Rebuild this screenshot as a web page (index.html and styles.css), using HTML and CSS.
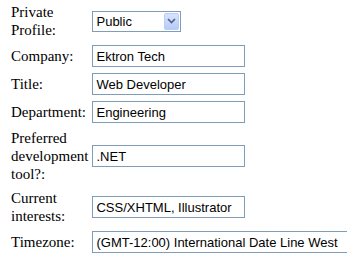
FILE: index.html
```html
<!DOCTYPE html>
<html lang="en">
<head>
    <meta charset="UTF-8">
    <title>Profile</title>
    <link rel="stylesheet" href="styles.css">
</head>
<body>
    <table class="profile-form">
        <tr>
            <td class="label">Private Profile:</td>
            <td>
                <div class="select-box">
                    <select>
                        <option>Public</option>
                        <option>Private</option>
                    </select>
                    <span class="select-button">
                        <svg width="9" height="6" viewBox="0 0 9 6"><path d="M1 1 L4.5 4.5 L8 1" fill="none" stroke="#4d6185" stroke-width="1.6"/></svg>
                    </span>
                </div>
            </td>
        </tr>
        <tr>
            <td class="label">Company:</td>
            <td><input type="text" value="Ektron Tech"></td>
        </tr>
        <tr>
            <td class="label">Title:</td>
            <td><input type="text" value="Web Developer"></td>
        </tr>
        <tr>
            <td class="label">Department:</td>
            <td><input type="text" value="Engineering"></td>
        </tr>
        <tr>
            <td class="label">Preferred development tool?:</td>
            <td><input type="text" value=".NET"></td>
        </tr>
        <tr>
            <td class="label">Current interests:</td>
            <td><input type="text" value="CSS/XHTML, Illustrator"></td>
        </tr>
        <tr>
            <td class="label">Timezone:</td>
            <td><input type="text" class="wide" value="(GMT-12:00) International Date Line West"></td>
        </tr>
    </table>
</body>
</html>
```

FILE: styles.css
```css
body {
    margin: 0;
    background-color: white;
    color: black;
    overflow: hidden;
}

.profile-form {
    border-collapse: collapse;
    margin: 0 0 0 9px;
}

.profile-form td {
    padding: 3px 2px;
    vertical-align: middle;
}

.profile-form .label {
    width: 77px;
    font-family: "Liberation Serif", "Times New Roman", serif;
    font-size: 15px;
    line-height: 18px;
}

input {
    box-sizing: border-box;
    width: 153px;
    height: 22px;
    margin: 0;
    padding: 0 3px;
    border: 1px solid #7f9db9;
    font-family: "Liberation Sans", Arial, sans-serif;
    font-size: 13px;
    color: black;
    display: block;
}

input.wide {
    width: 262px;
}

.select-box {
    position: relative;
    width: 89px;
    height: 21px;
}

.select-box select {
    appearance: none;
    -webkit-appearance: none;
    box-sizing: border-box;
    width: 89px;
    height: 21px;
    margin: 0;
    padding: 0 3px;
    border: 1px solid #7f9db9;
    border-radius: 0;
    background-color: white;
    font-family: "Liberation Sans", Arial, sans-serif;
    font-size: 13px;
    color: black;
    display: block;
}

.select-button {
    position: absolute;
    top: 2px;
    right: 2px;
    width: 13px;
    height: 15px;
    border: 1px solid #bccdf5;
    border-radius: 2px;
    background: linear-gradient(#d7e3fd, #b7cbf8);
    display: flex;
    align-items: center;
    justify-content: center;
}
```
